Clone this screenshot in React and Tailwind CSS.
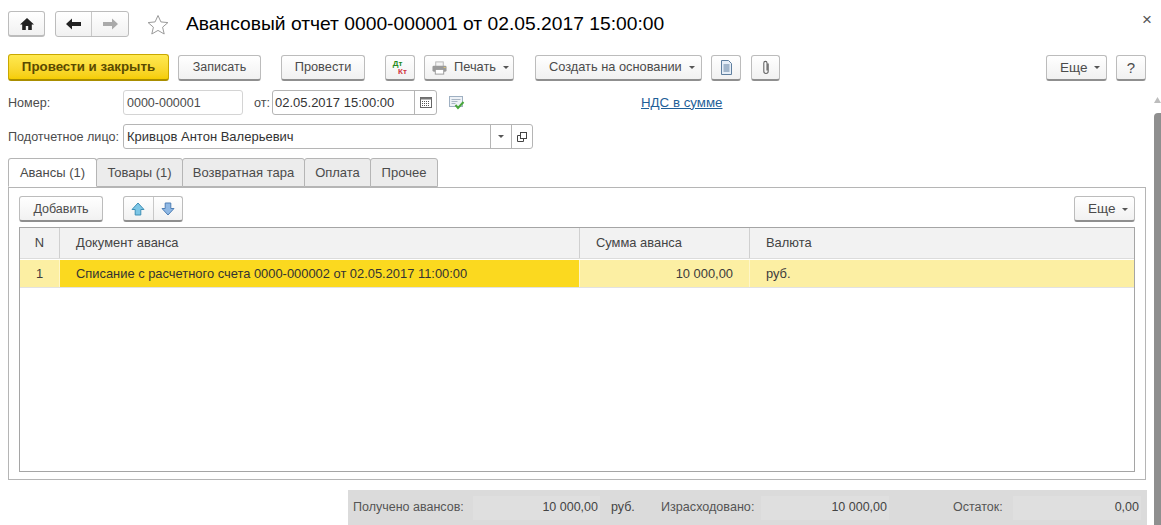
import React from 'react'

const btn = 'flex items-center justify-center h-[26px] pt-px rounded-[3px] border border-[#bcbcbc] border-b-[#8f8f8f] border-b-2 bg-gradient-to-b from-white to-[#f1f1f1] text-[#4b4b4b] text-[12.8px] leading-none'

function Caret({ className = '' }) {
  return (
    <svg width="6" height="3" viewBox="0 0 6 3" className={className}>
      <path d="M0 0h6L3 3z" fill="#555" />
    </svg>
  )
}

function HomeIcon() {
  return (
    <svg width="16" height="14" viewBox="0 0 16 14">
      <path d="M8 1 1 7.5h2.2V13h3.6V9h2.4v4h3.6V7.5H15z" fill="#222" />
    </svg>
  )
}

function ArrowIcon({ dir, color }) {
  return (
    <svg width="15" height="12" viewBox="0 0 15 12">
      <path d={dir === 'left' ? 'M0 6l6-5.5V4h9v4H6v3.5z' : 'M15 6L9 .5V4H0v4h9v3.5z'} fill={color} />
    </svg>
  )
}

function StarIcon() {
  return (
    <svg width="22" height="21" viewBox="0 0 22 21">
      <path d="M11 1.5l2.9 6.4 7 .7-5.3 4.6 1.6 6.8L11 16.4l-6.2 3.6 1.6-6.8L1.1 8.6l7-.7z" fill="none" stroke="#9a9a9a" />
    </svg>
  )
}

function PrinterIcon() {
  return (
    <svg width="15" height="14" viewBox="0 0 16 14">
      <rect x="4" y="0.5" width="8" height="5" fill="#f4f4f4" stroke="#b5b5b5" />
      <rect x="0.5" y="4.5" width="15" height="6.5" rx="1.5" fill="#9a9a9a" />
      <rect x="3.5" y="8.5" width="9" height="5" fill="#fff" stroke="#999" />
      <rect x="12.5" y="6" width="2" height="1" fill="#e2c66a" />
    </svg>
  )
}

function DocIcon() {
  return (
    <svg width="13" height="15" viewBox="0 0 13 15">
      <path d="M1.5.5h7l3 3v11h-10z" fill="#e6eef7" stroke="#5f7f9f" />
      <path d="M3.5 5h6M3.5 7h6M3.5 9h6M3.5 11h6" stroke="#5f7f9f" />
    </svg>
  )
}

function ClipIcon() {
  return (
    <svg width="8" height="15" viewBox="0 0 8 15">
      <path d="M6.2 3.5v7.8a2.2 2.2 0 0 1-4.4 0V3a1.6 1.6 0 0 1 3.2 0v7.5" fill="none" stroke="#666" strokeWidth="1.1" />
    </svg>
  )
}

function CalendarIcon() {
  return (
    <svg width="12" height="11" viewBox="0 0 12 11">
      <rect x="0.5" y="0.5" width="11" height="10" fill="#fff" stroke="#666" />
      <rect x="0.5" y="0.5" width="11" height="2" fill="#777" />
      <path d="M2 4.5h8M2 6.5h8M2 8.5h8" stroke="#555" strokeDasharray="1 1" />
    </svg>
  )
}

function CheckDocIcon() {
  return (
    <svg width="16" height="14" viewBox="0 0 16 14">
      <rect x="0.5" y="0.5" width="13" height="10" fill="#eef2f7" stroke="#9fb0c2" />
      <path d="M2.5 3.5h9M2.5 5.5h6M2.5 7.5h4" stroke="#a9b6c4" />
      <path d="M6.5 9l2.5 3 5.5-6" fill="none" stroke="#49a63c" strokeWidth="2" />
    </svg>
  )
}

function CopyIcon() {
  return (
    <svg width="10" height="10" viewBox="0 0 10 10">
      <rect x="3.5" y="0.5" width="6" height="6" fill="#fff" stroke="#444" />
      <path d="M3 3.5H.5v6h6V7" fill="none" stroke="#444" />
    </svg>
  )
}

function BlueArrow({ up }) {
  return (
    <svg width="14" height="14" viewBox="0 0 14 14">
      <path
        d={up ? 'M7 1l6 6.5H9.8V13H4.2V7.5H1z' : 'M7 13l6-6.5H9.8V1H4.2v5.5H1z'}
        fill={up ? '#7cc6e6' : '#8fb8e4'}
        stroke={up ? '#3f8fb5' : '#4f7fb5'}
      />
    </svg>
  )
}

function Label({ children, className = '' }) {
  return <span className={`pt-[2px] text-[12.6px] text-[#4b4b4b] ${className}`}>{children}</span>
}

function Tab({ width, active, children }) {
  return (
    <div className={`flex items-center justify-center h-[29px] border border-[#b5b5b5] rounded-t-[3px] -mr-px text-[13px] text-[#4b4b4b] ${width} ${active ? 'bg-white border-b-white -mb-px relative' : 'bg-[#ececec]'}`}>
      {children}
    </div>
  )
}

function FooterField({ value, width }) {
  return (
    <div className={`flex items-center justify-end h-[24px] pr-[2px] bg-[#dfdfdf] text-[12.5px] text-[#444] ${width}`}>
      {value}
    </div>
  )
}

export default function App() {
  return (
    <div className="relative flex flex-col w-[1161px] h-[525px] overflow-hidden bg-white font-['Liberation_Sans',Arial,sans-serif]">
      {/* Header */}
      <div className="flex items-center h-[26px] mt-[11px] ml-2">
        <div className={`${btn} w-[37px] border-b-[#bcbcbc] border-b`}><HomeIcon /></div>
        <div className="flex w-[74px] h-[26px] ml-[10px] rounded-[3px] border border-[#bcbcbc] bg-gradient-to-b from-white to-[#f1f1f1]">
          <div className="flex flex-1 items-center justify-center border-r border-[#c8c8c8]"><ArrowIcon dir="left" color="#222" /></div>
          <div className="flex w-[36px] items-center justify-center"><ArrowIcon dir="right" color="#aaa" /></div>
        </div>
        <div className="flex ml-[18px]"><StarIcon /></div>
        <span className="ml-[17px] text-[19.25px] text-black whitespace-nowrap">Авансовый отчет 0000-000001 от 02.05.2017 15:00:00</span>
      </div>
      <span className="absolute left-[1142px] top-[11px] text-[17px] leading-[18px] text-[#555]">×</span>

      {/* Toolbar */}
      <div className="flex items-center h-[27px] mt-[17px] ml-2 pr-[15px]">
        <div className="flex items-center justify-center w-[161px] h-[27px] rounded-[3px] border border-[#c9a800] border-b-2 border-b-[#a98e00] bg-gradient-to-b from-[#ffe94f] to-[#f5cd00] text-[13.3px] font-bold text-[#5a4a00]">Провести и закрыть</div>
        <div className={`${btn} w-[83px] ml-[9px] !text-[12.5px]`}>Записать</div>
        <div className={`${btn} w-[84px] ml-[20px]`}>Провести</div>
        <div className={`${btn} w-[30px] ml-[20px] flex-col`}>
          <span className="block text-[8px] leading-[8px] font-bold text-[#1f8a1f] -ml-[5px]">Дт</span>
          <span className="block text-[8px] leading-[8px] font-bold text-[#d0343c] ml-[5px]">Кт</span>
        </div>
        <div className={`${btn} w-[90px] ml-[9px] !justify-start pl-[7px]`}>
          <PrinterIcon />
          <span className="ml-[7px]">Печать</span>
          <Caret className="ml-[7px]" />
        </div>
        <div className={`${btn} w-[167px] ml-[21px] !justify-start pl-[13px] gap-[7px]`}><span>Создать на основании</span><Caret /></div>
        <div className={`${btn} w-[30px] ml-[9px]`}><DocIcon /></div>
        <div className={`${btn} w-[29px] ml-[10px]`}><ClipIcon /></div>
        <div className={`${btn} w-[61px] ml-auto !justify-start pl-[13px] gap-[7px] !text-[13.5px]`}><span>Еще</span><Caret /></div>
        <div className={`${btn} w-[30px] ml-[9px] !text-[15px]`}>?</div>
      </div>

      {/* Body */}
      <div className="flex flex-1 mt-[9px] min-h-0">
        <div className="flex flex-col w-[1146px] ml-2 shrink-0">
          <div className="flex items-center h-[25px]">
            <Label className="w-[115px]">Номер:</Label>
            <div className="flex items-center w-[120px] h-[25px] pt-[2px] px-[3px] rounded-[3px] border border-[#d4d4d4] text-[12.5px] text-[#4b4b4b]">0000-000001</div>
            <Label className="ml-[11px]">от:</Label>
            <div className="flex w-[165px] h-[25px] ml-[2px] rounded-[3px] border border-[#b5b5b5] text-[13px] text-[#333]">
              <div className="flex flex-1 items-center px-[2px]">02.05.2017 15:00:00</div>
              <div className="flex w-[22px] items-center justify-center border-l border-[#b5b5b5]"><CalendarIcon /></div>
            </div>
            <div className="flex ml-[12px]"><CheckDocIcon /></div>
            <a className="ml-[176px] text-[13.3px] text-[#1f5f99] underline">НДС в сумме</a>
          </div>

          <div className="flex items-center h-[25px] mt-[9px]">
            <Label className="w-[115px] whitespace-nowrap">Подотчетное лицо:</Label>
            <div className="flex w-[410px] h-[25px] rounded-[3px] border border-[#b5b5b5] text-[13px] text-[#333]">
              <div className="flex flex-1 items-center px-[3px]">Кривцов Антон Валерьевич</div>
              <div className="flex w-[21px] items-center justify-center border-l border-[#b5b5b5]"><Caret /></div>
              <div className="flex w-[21px] items-center justify-center border-l border-[#b5b5b5]"><CopyIcon /></div>
            </div>
          </div>

          {/* Tabs */}
          <div className="flex mt-[9px]">
            <Tab width="w-[89px]" active>Авансы (1)</Tab>
            <Tab width="w-[87px]">Товары (1)</Tab>
            <Tab width="w-[123px]">Возвратная тара</Tab>
            <Tab width="w-[67px]">Оплата</Tab>
            <Tab width="w-[68px]">Прочее</Tab>
          </div>

          <div className="flex flex-col h-[294px] w-[1138px] border border-[#b5b5b5] px-[10px] pt-[8px]">
            <div className="flex items-center h-[26px]">
              <div className={`${btn} w-[84px] !text-[12.5px]`}>Добавить</div>
              <div className="flex w-[60px] h-[26px] ml-[20px] rounded-[3px] border border-[#bcbcbc] border-b-2 border-b-[#8f8f8f] bg-gradient-to-b from-white to-[#f1f1f1]">
                <div className="flex flex-1 items-center justify-center border-r border-[#c8c8c8]"><BlueArrow up /></div>
                <div className="flex flex-1 items-center justify-center"><BlueArrow /></div>
              </div>
              <div className={`${btn} w-[61px] ml-auto !justify-start pl-[13px] gap-[7px] !text-[13.5px]`}><span>Еще</span><Caret /></div>
            </div>

            {/* Table */}
            <div className="flex flex-col w-[1116px] h-[245px] mt-[5px] border border-[#a5a5a5] text-[12.9px] text-[#444]">
              <div className="flex h-[31px] bg-[#f2f2f2] border-b border-[#dcdcdc]">
                <div className="flex w-[40px] items-center justify-center border-r border-[#d0d0d0]">N</div>
                <div className="flex w-[520px] items-center pl-[16px] border-r border-[#d0d0d0]">Документ аванса</div>
                <div className="flex w-[170px] items-center pl-[16px] border-r border-[#d0d0d0]">Сумма аванса</div>
                <div className="flex flex-1 items-center pl-[16px]">Валюта</div>
              </div>
              <div className="flex h-[28px] mt-px border-b border-[#e2e2e2] bg-[#fcefa3] text-[#3c3c3c]">
                <div className="flex w-[40px] items-center justify-center border-r border-[#fff6c8]">1</div>
                <div className="flex w-[520px] items-center pl-[16px] bg-[#fbd91f] border-r border-[#fff6c8] text-[#333]">Списание с расчетного счета 0000-000002 от 02.05.2017 11:00:00</div>
                <div className="flex w-[170px] items-center justify-end pr-[16px] border-r border-[#fff6c8]">10 000,00</div>
                <div className="flex flex-1 items-center pl-[16px]">руб.</div>
              </div>
            </div>
          </div>

          {/* Totals */}
          <div className="flex items-center self-end w-[799px] h-[35px] mt-[10px] mr-[7px] px-[5px] bg-[#dbdbdb] text-[12.5px] text-[#555]">
            <span className="w-[120px]">Получено авансов:</span>
            <FooterField value="10 000,00" width="w-[127px]" />
            <span className="ml-[11px] w-[50px] text-[#444]">руб.</span>
            <span className="w-[100px] text-[12.6px]">Израсходовано:</span>
            <FooterField value="10 000,00" width="w-[128px]" />
            <span className="ml-[64px] w-[60px]">Остаток:</span>
            <FooterField value="0,00" width="w-[128px]" />
          </div>
        </div>

        {/* Scrollbar */}
        <div className="flex flex-col items-end w-[7px] h-full">
          <svg width="7" height="6" viewBox="0 0 7 6" className="mt-[7px]"><path d="M3.5 0 7 6H0z" fill="#bdbdbd" /></svg>
          <div className="w-[7px] flex-1 mt-[10px] rounded-tl-[4px] bg-[#8f8f8f]" />
        </div>
      </div>
    </div>
  )
}
